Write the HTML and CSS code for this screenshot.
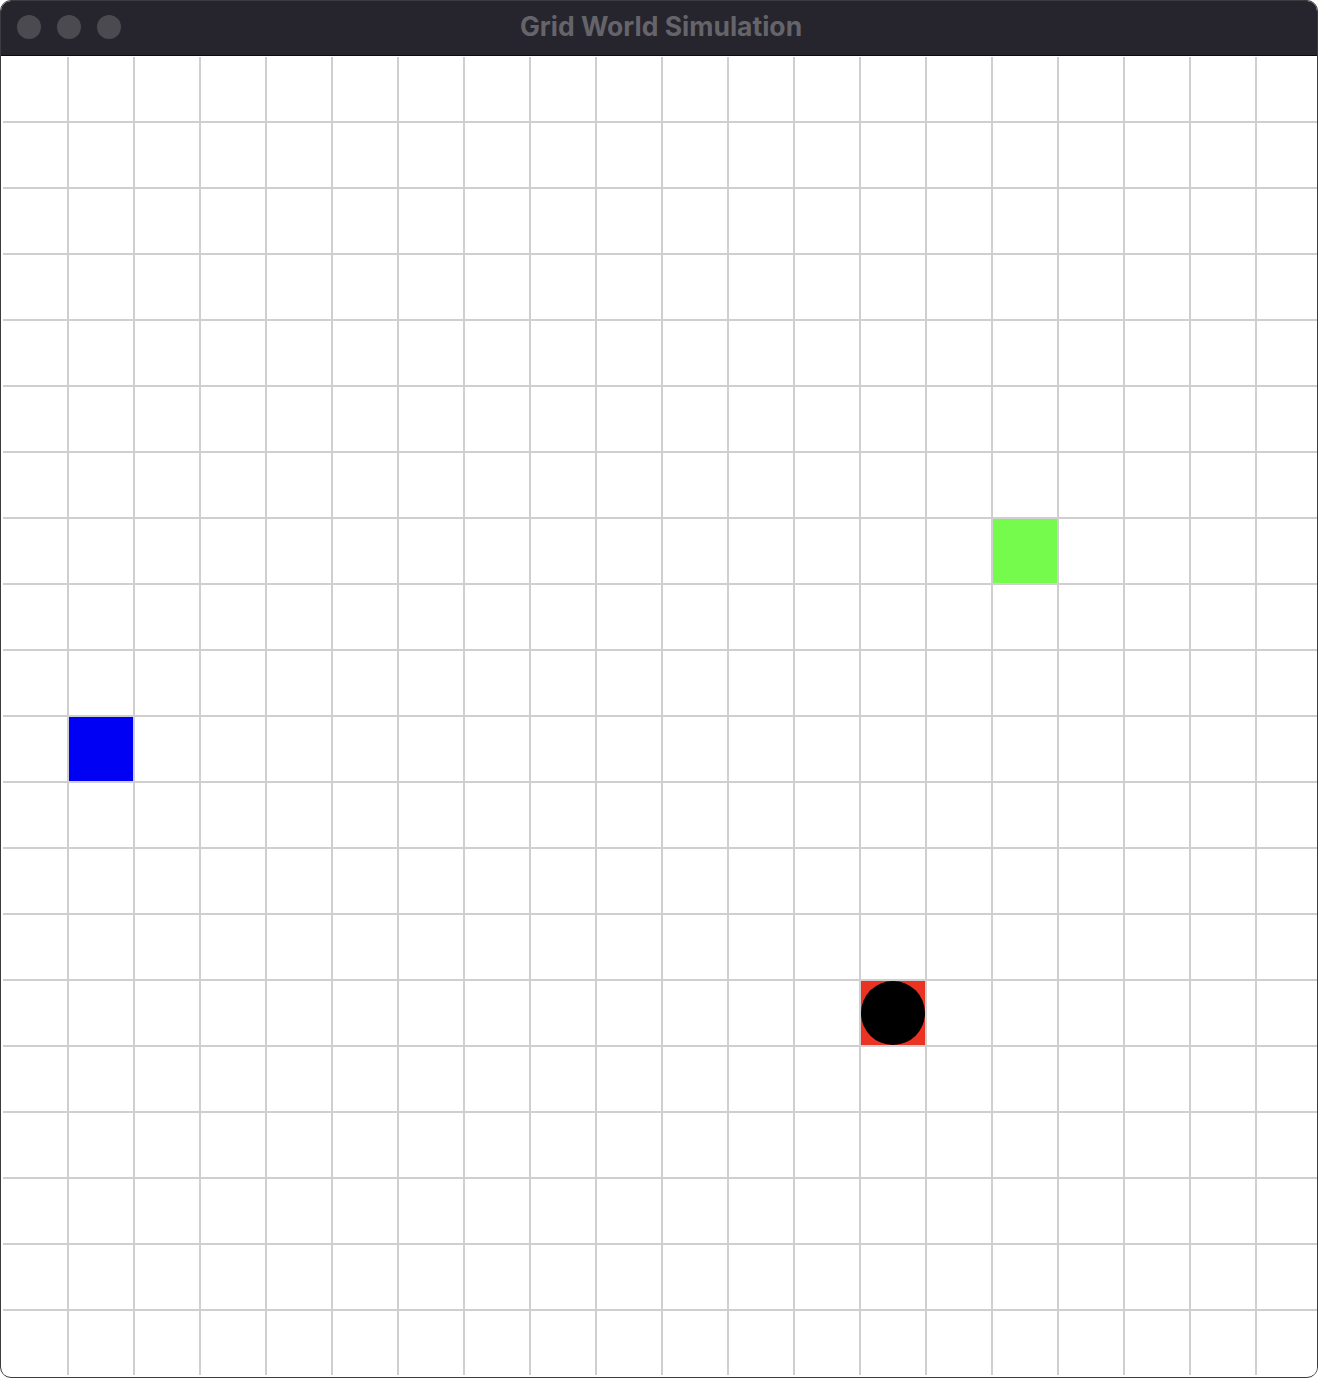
FILE: index.html
```html
<!DOCTYPE html>
<html>
<head>
<meta charset="utf-8">
<title>Grid World Simulation</title>
<link rel="stylesheet" href="styles.css">
</head>
<body>
<div class="window">
  <div class="titlebar">
    <div class="lights">
      <span class="light"></span>
      <span class="light"></span>
      <span class="light"></span>
    </div>
    <div class="title">Grid World Simulation</div>
  </div>
  <div class="board">
    <div class="cell goal"></div>
    <div class="cell start"></div>
    <div class="cell agent"><span class="dot"></span></div>
  </div>
</div>
</body>
</html>
```
FILE: styles.css
```css
html, body {
  margin: 0;
  padding: 0;
  background: #ffffff;
}
.window {
  width: 1318px;
  height: 1378px;
  box-sizing: border-box;
  border: 1px solid #3c3c40;
  border-radius: 11px;
  overflow: hidden;
  background: #ffffff;
  display: flex;
  flex-direction: column;
}
.titlebar {
  position: relative;
  height: 54px;
  flex: none;
  background: #26252d;
  border-bottom: 1px solid #0c0c0e;
  display: flex;
  align-items: center;
  justify-content: center;
}
.lights {
  position: absolute;
  left: 16px;
  top: 14px;
  display: flex;
  gap: 16px;
}
.light {
  width: 24px;
  height: 24px;
  border-radius: 50%;
  background: #4b4a50;
}
.title {
  font-family: Inter, "Noto Sans", sans-serif;
  font-weight: 700;
  font-size: 26.5px;
  color: #65646a;
  margin-top: -4px;
  margin-left: 4px;
}
.board {
  flex: none;
  margin: 1px 0 0 2px;
  display: grid;
  grid-template-columns: repeat(20, 64px);
  grid-template-rows: repeat(20, 64px);
  gap: 2px;
  width: 1318px;
  background-color: #ffffff;
  background-image:
    linear-gradient(to right, transparent 64px, #cfcfcf 64px, #cfcfcf 66px),
    linear-gradient(to bottom, transparent 64px, #cfcfcf 64px, #cfcfcf 66px);
  background-size: 66px 66px;
}
.cell {
  display: flex;
  align-items: center;
  justify-content: center;
}
.goal {
  grid-column: 16;
  grid-row: 8;
  background: #75fb4c;
}
.start {
  grid-column: 2;
  grid-row: 11;
  background: #0000f5;
}
.agent {
  grid-column: 14;
  grid-row: 15;
  background: #ea3323;
}
.dot {
  width: 64px;
  height: 64px;
  border-radius: 50%;
  background: #000000;
}
```
